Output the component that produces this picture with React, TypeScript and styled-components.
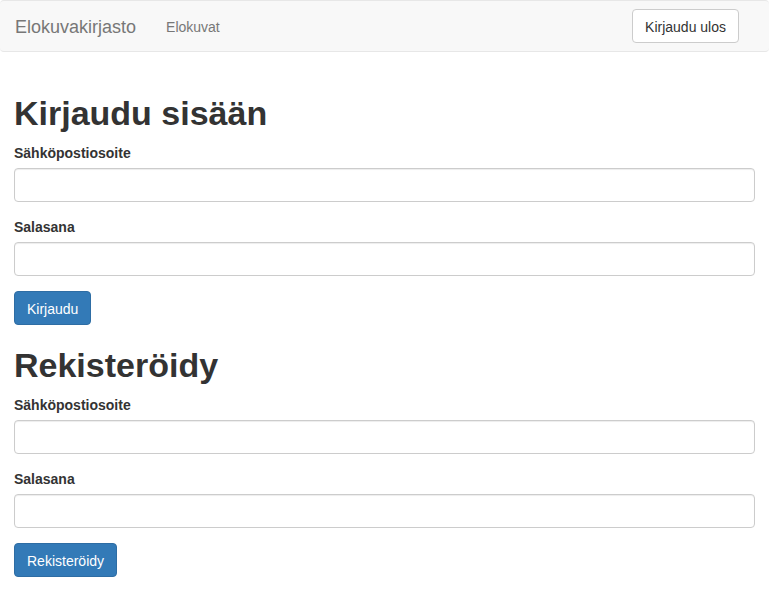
import React from "react";
import styled, { createGlobalStyle } from "styled-components";

const GlobalStyle = createGlobalStyle`
  *, *::before, *::after { box-sizing: border-box; }
  body {
    margin: 0;
    background: #fff;
    color: #333;
    font-family: "Helvetica Neue", "Liberation Sans", Helvetica, Arial, sans-serif;
    font-size: 14px;
    line-height: 20px;
  }
`;

const Navbar = styled.nav`
  display: flex;
  align-items: center;
  min-height: 52px;
  padding: 0 30px 0 15px;
  background: #f8f8f8;
  border: 1px solid #e7e7e7;
  border-width: 1px 0;
  border-radius: 4px;
`;

const Brand = styled.a`
  margin-right: 30px;
  padding-top: 2px;
  color: #777;
  font-size: 18px;
  text-decoration: none;
`;

const NavLink = styled.a`
  padding-top: 2px;
  color: #777;
  text-decoration: none;
`;

const Button = styled.button<{ $primary?: boolean }>`
  height: 34px;
  padding: 2px 12px 0;
  border: 1px solid ${(p) => (p.$primary ? "#2e6da4" : "#ccc")};
  border-radius: 4px;
  background: ${(p) => (p.$primary ? "#337ab7" : "#fff")};
  color: ${(p) => (p.$primary ? "#fff" : "#333")};
  font: inherit;
  white-space: nowrap;
  cursor: pointer;
`;

const LogoutButton = styled(Button)`
  margin-left: auto;
`;

const Main = styled.main`
  padding: 21px 14px 14px;
`;

const Title = styled.h1`
  margin: 20px 0 10px;
  font-size: 34px;
  font-weight: 700;
  line-height: 40px;
`;

const Field = styled.div`
  margin-bottom: 15px;
`;

const Label = styled.label`
  display: block;
  margin-bottom: 5px;
  font-weight: 700;
`;

const Input = styled.input`
  display: block;
  width: 100%;
  height: 34px;
  padding: 6px 12px;
  border: 1px solid #ccc;
  border-radius: 4px;
  background: #fff;
  color: #555;
  font: inherit;
  box-shadow: inset 0 1px 1px rgba(0, 0, 0, 0.075);
`;

interface CredentialsFormProps {
  id: string;
  title: string;
  submit: string;
}

function CredentialsForm({ id, title, submit }: CredentialsFormProps) {
  return (
    <form onSubmit={(e) => e.preventDefault()}>
      <Title>{title}</Title>
      <Field>
        <Label htmlFor={`${id}-email`}>Sähköpostiosoite</Label>
        <Input id={`${id}-email`} type="email" />
      </Field>
      <Field>
        <Label htmlFor={`${id}-password`}>Salasana</Label>
        <Input id={`${id}-password`} type="password" />
      </Field>
      <Button $primary type="submit">{submit}</Button>
    </form>
  );
}

export default function App() {
  return (
    <>
      <GlobalStyle />
      <Navbar>
        <Brand href="#">Elokuvakirjasto</Brand>
        <NavLink href="#elokuvat">Elokuvat</NavLink>
        <LogoutButton type="button">Kirjaudu ulos</LogoutButton>
      </Navbar>
      <Main>
        <CredentialsForm id="login" title="Kirjaudu sisään" submit="Kirjaudu" />
        <CredentialsForm id="register" title="Rekisteröidy" submit="Rekisteröidy" />
      </Main>
    </>
  );
}
